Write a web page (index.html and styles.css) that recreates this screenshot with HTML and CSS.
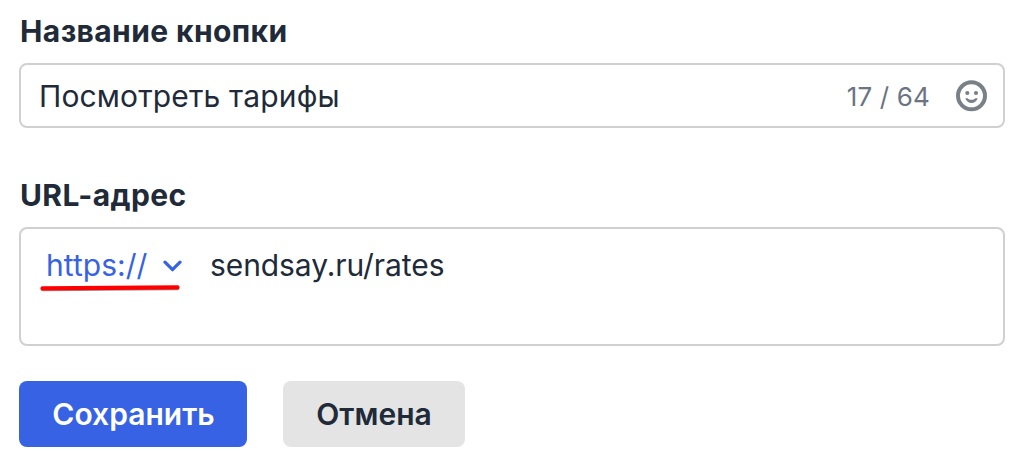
FILE: index.html
```html
<!DOCTYPE html>
<html lang="ru">
<head>
<meta charset="utf-8">
<title>Кнопка</title>
<link rel="stylesheet" href="styles.css">
</head>
<body>
<form class="form">
  <label class="label">Название кнопки</label>
  <div class="field">
    <span class="value">Посмотреть тарифы</span>
    <span class="counter">17 / 64</span>
    <svg class="emoji" viewBox="0 0 32 32" width="32" height="32">
      <circle cx="16.500" cy="15.800" r="13.500" fill="none" stroke="#7a8088" stroke-width="4"/>
      <circle cx="12.300" cy="13" r="2.100" fill="#7a8088"/>
      <circle cx="21" cy="13" r="2.100" fill="#7a8088"/>
      <path d="M10.300 18.200H12.700C14.500 20.400 18.500 20.400 20.300 18.200H22.700C20.800 24.600 12.200 24.600 10.300 18.200Z" fill="#7a8088"/>
    </svg>
  </div>
  <label class="label label-url">URL-адрес</label>
  <div class="field field-url">
    <span class="protocol">
      <span class="scheme">https://</span>
      <svg class="chevron" viewBox="0 0 20 14" width="20" height="14"><path d="M2 4.200l7.500 7.500 7.500-7.500" fill="none" stroke="#3862e4" stroke-width="3.200" stroke-linecap="round" stroke-linejoin="round"/></svg>
      <svg class="mark" viewBox="0 0 142 8" width="142" height="8"><path d="M2.500 5.200L137.500 4.200" stroke="#555" stroke-opacity=".6" stroke-width="4" stroke-linecap="round"/><path d="M2.500 4.300L137.500 3.300" stroke="#f00" stroke-width="4.200" stroke-linecap="round"/></svg>
    </span>
    <span class="address">sendsay.ru/rates</span>
  </div>
  <div class="actions">
    <button type="button" class="button primary">Сохранить</button>
    <button type="button" class="button secondary">Отмена</button>
  </div>
</form>
</body>
</html>
```
FILE: styles.css
```css
* { box-sizing: border-box; }
body { margin: 0; background: #fff; color: #212a38; font-family: Inter, sans-serif; font-size: 30px; }
.form { display: flex; flex-direction: column; padding: 11px 21px 0 19px; }
.label { height: 40px; margin-bottom: 12px; padding-left: 1px; line-height: 40px; font-size: 30px; font-weight: 700; letter-spacing: .4px; white-space: nowrap; }
.label-url { margin-top: 47px; }
.field { display: flex; align-items: center; height: 65px; padding: 0 16px 0 18px; border: 2px solid #d0d0d0; border-radius: 8px; white-space: nowrap; }
.value { flex: 1; letter-spacing: .15px; }
.counter { padding-top: 1px; color: #6c7382; font-size: 26px; letter-spacing: .15px; }
.emoji { margin-left: 25px; }
.field-url { align-items: flex-start; height: 119px; padding: 16px 25px; }
.protocol { position: relative; display: flex; align-items: center; width: 164px; height: 40px; color: #3862e4; }
.scheme { letter-spacing: .04px; }
.chevron { margin-left: 16px; }
.mark { position: absolute; left: -6px; top: 39px; }
.address { line-height: 40px; letter-spacing: -.08px; }
.actions { display: flex; gap: 36px; margin-top: 35px; }
.button { height: 66px; padding: 0; border: 0; border-radius: 8px; font: 600 30px Inter, sans-serif; }
.primary { width: 228px; padding-left: 1px; background: #3862e4; color: #fff; }
.secondary { width: 182px; background: #e4e4e4; color: #212a38; }
```
